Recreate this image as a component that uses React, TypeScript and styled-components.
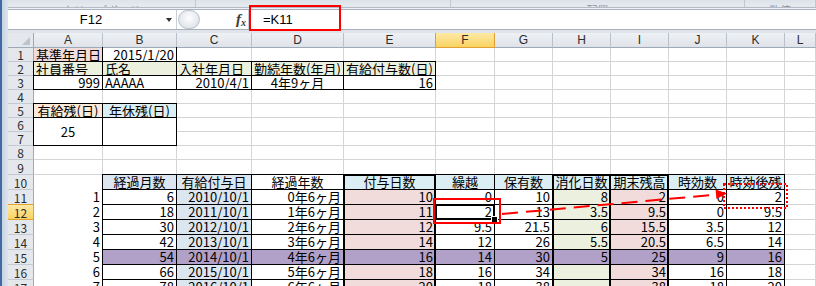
import { Fragment } from "react";
import styled, { createGlobalStyle, css } from "styled-components";

const GlobalStyle = createGlobalStyle`
  html, body {
    margin: 0;
    padding: 0;
    background: #ffffff;
  }
  body {
    font-family: "Noto Sans CJK JP", "Noto Sans", sans-serif;
  }
`;

const GRID = "#d4d4d4";
const PINK = "#f2dcdb";
const SAGE = "#ebf1de";
const PEACH = "#fde9d9";
const AQUA = "#daeef3";
const STEEL = "#dce6f1";
const LILAC = "#b1a0c7";
const ACTIVE = "linear-gradient(#fde9a6, #f9d462)";

type Align = "l" | "c" | "r";
type Box = [number, number, number, number];
type Spec = {
  t?: string;
  a?: Align;
  bg?: string;
  b?: Box;
  span?: number;
  plain?: boolean;
  sel?: boolean;
} | null;

const justify = { l: "flex-start", c: "center", r: "flex-end" };

const Window = styled.div`
  position: relative;
  width: 816px;
  height: 286px;
  overflow: hidden;
  display: flex;
  background: #fff;
`;

const Frame = styled.div`
  width: 8px;
  flex: none;
  background: linear-gradient(90deg, #4169a3 0, #4169a3 2px, #c8d3e2 2px, #dde4ee 8px);
`;

const Main = styled.div`
  flex: 1;
  min-width: 0;
  display: flex;
  flex-direction: column;
`;

const Ribbon = styled.div`
  height: 7px;
  flex: none;
  display: flex;
  overflow: hidden;
  background: linear-gradient(#dce3eb, #e7ebf0);
  border-bottom: 1px solid #b3bbc6;
`;

const RibbonGroup = styled.div<{ $w?: number }>`
  ${(p) => (p.$w ? `width: ${p.$w}px; flex: none;` : "flex: 1;")}
  display: flex;
  justify-content: center;
  align-items: flex-end;
  border-right: 1px solid #c1c8d2;
`;

const GroupLabel = styled.span`
  font-size: 11px;
  line-height: 11px;
  color: #8a929d;
  white-space: nowrap;
  margin-bottom: -9px;
`;

const Gap = styled.div`
  height: 1px;
  flex: none;
  background: #eef1f5;
`;

const FormulaBar = styled.div`
  height: 21px;
  flex: none;
  box-sizing: border-box;
  display: flex;
  background: #fff;
  border-top: 1px solid #a7b0bc;
  border-bottom: 1px solid #a7b0bc;
`;

const NameBox = styled.div`
  width: 169px;
  flex: none;
  box-sizing: border-box;
  display: flex;
  align-items: center;
  border-right: 1px solid #c9cfd8;
  font-family: "Liberation Sans", sans-serif;
  font-size: 13px;
  color: #000;
`;

const NameText = styled.span`
  flex: 1;
  text-align: center;
  padding-left: 8px;
`;

const DropArrow = styled.span`
  width: 0;
  height: 0;
  margin-right: 4px;
  border-left: 3.5px solid transparent;
  border-right: 3.5px solid transparent;
  border-top: 4px solid #333;
`;

const Grip = styled.div`
  width: 22px;
  flex: none;
  margin: 0 0 0 1px;
  box-sizing: border-box;
  border: 1px solid #b9c0ca;
  border-radius: 10px;
  background: radial-gradient(circle at 50% 40%, #ffffff, #d5dae2);
`;

const FxBox = styled.div`
  width: 48px;
  flex: none;
  box-sizing: border-box;
  display: flex;
  align-items: center;
  justify-content: flex-end;
  padding-right: 2px;
  font-family: "Liberation Serif", serif;
  font-style: italic;
  font-weight: bold;
  font-size: 15px;
  color: #3a3a3a;
`;

const FxSub = styled.span`
  font-size: 10px;
  margin-top: 5px;
`;

const FormulaInput = styled.div`
  flex: 1;
  display: flex;
  align-items: center;
  padding-left: 14px;
  border-left: 1px solid #c9cfd8;
  font-family: "Liberation Sans", sans-serif;
  font-size: 13px;
  color: #000;
`;

const Band = styled.div`
  height: 3px;
  flex: none;
  background: #e0e4ea;
`;

const Sheet = styled.div`
  flex: none;
  display: grid;
  grid-template-columns: 26px 69px 74px 75px 92px 92px 59px 58px 58px 58px 58px 58px 1fr;
  grid-template-rows: 15px repeat(8, 14px) 15px repeat(8, 15px);
  font-family: "Liberation Sans Narrow", "Noto Sans CJK JP", sans-serif;
`;

const Corner = styled.div`
  box-sizing: border-box;
  display: flex;
  align-items: flex-end;
  justify-content: flex-end;
  padding: 0 3px 2px 0;
  background: #e4e8ed;
  border-right: 1px solid #9ea9b7;
  border-bottom: 1px solid #9ea9b7;
`;

const CornerMark = styled.div`
  width: 0;
  height: 0;
  border-left: 8px solid transparent;
  border-bottom: 8px solid #bcc3cd;
`;

const ColHead = styled.div<{ $active?: boolean }>`
  box-sizing: border-box;
  display: flex;
  align-items: center;
  justify-content: center;
  font-family: "Liberation Sans", sans-serif;
  font-size: 12px;
  color: #2d2d2d;
  background: ${(p) => (p.$active ? ACTIVE : "linear-gradient(#eef1f4, #dfe3e9)")};
  border-right: 1px solid ${(p) => (p.$active ? "#e2a032" : "#b8c0ca")};
  border-bottom: 1px solid ${(p) => (p.$active ? "#e2a032" : "#9ea9b7")};
  ${(p) => p.$active && "border-left: 1px solid #e2a032; margin-left: -1px;"}
`;

const RowHead = styled.div<{ $active?: boolean }>`
  box-sizing: border-box;
  display: flex;
  align-items: center;
  justify-content: center;
  font-size: 12px;
  color: #2d2d2d;
  background: ${(p) => (p.$active ? ACTIVE : "#e4e8ed")};
  border-right: 1px solid ${(p) => (p.$active ? "#e2a032" : "#9ea9b7")};
  border-bottom: 1px solid ${(p) => (p.$active ? "#e2a032" : "#c3cad3")};
  ${(p) => p.$active && "border-top: 1px solid #e2a032; margin-top: -1px;"}
`;

const Cell = styled.div<{ $a: Align; $bg?: string; $plain?: boolean; $span?: number; $b?: Box }>`
  position: relative;
  box-sizing: border-box;
  grid-row: span ${(p) => p.$span ?? 1};
  display: flex;
  align-items: center;
  justify-content: ${(p) => justify[p.$a]};
  padding: 0 2px;
  font-size: 13px;
  line-height: 14px;
  white-space: nowrap;
  color: #000;
  background: ${(p) => p.$bg ?? "#fff"};
  border-right: 1px solid ${(p) => (p.$bg || p.$plain ? p.$bg ?? "#fff" : GRID)};
  border-bottom: 1px solid ${(p) => (p.$bg || p.$plain ? p.$bg ?? "#fff" : GRID)};
  ${(p) =>
    p.$b &&
    css`
      &::after {
        content: "";
        position: absolute;
        top: -1px;
        left: -1px;
        right: -1px;
        bottom: -1px;
        border-style: solid;
        border-color: #000;
        border-width: ${p.$b[0]}px ${p.$b[1]}px ${p.$b[2]}px ${p.$b[3]}px;
        pointer-events: none;
      }
    `}
`;

const FillHandle = styled.span`
  position: absolute;
  right: -4px;
  bottom: -4px;
  width: 5px;
  height: 5px;
  background: #000;
  border: 1px solid #fff;
  z-index: 2;
`;

const Marks = styled.svg`
  position: absolute;
  top: 0;
  left: 0;
  z-index: 3;
  pointer-events: none;
`;

const T: Box = [1, 1, 1, 1];
const THICK_E: Box = [1, 2, 1, 2];
const blank = (n: number): Spec[] => Array.from({ length: n }, () => ({}));

const COLS = "ABCDEFGHIJKL".split("");

const upper: Spec[][] = [
  [
    { t: "基準年月日", a: "l", bg: PINK, b: [0, 1, 0, 0] },
    { t: "2015/1/20", a: "r", b: [0, 1, 0, 0] },
    ...blank(10),
  ],
  [
    ...["社員番号", "氏名", "入社年月日", "勤続年数(年月)", "有給付与数(日)"].map(
      (t): Spec => ({ t, a: "l", bg: SAGE, b: T })
    ),
    ...blank(7),
  ],
  [
    { t: "999", a: "r", b: T },
    { t: "AAAAA", a: "l", b: T },
    { t: "2010/4/1", a: "r", b: T },
    { t: "4年9ヶ月", a: "c", b: T },
    { t: "16", a: "r", b: T },
    ...blank(7),
  ],
  blank(12),
  [
    { t: "有給残(日)", a: "c", bg: PEACH, b: T },
    { t: "年休残(日)", a: "c", bg: AQUA, b: T },
    ...blank(10),
  ],
  [{ t: "25", a: "c", b: T, span: 2 }, { b: T, span: 2 }, ...blank(10)],
  [null, null, ...blank(10)],
  blank(12),
  blank(12),
];

const header: Spec[] = [
  { plain: true },
  { t: "経過月数", a: "c", bg: STEEL, b: T },
  { t: "有給付与日", a: "c", bg: STEEL, b: T },
  { t: "経過年数", a: "c", b: T },
  { t: "付与日数", a: "c", bg: AQUA, b: [2, 2, 1, 2] },
  { t: "繰越", a: "c", bg: AQUA, b: T },
  { t: "保有数", a: "c", bg: AQUA, b: T },
  { t: "消化日数", a: "c", bg: AQUA, b: [2, 2, 1, 2] },
  { t: "期末残高", a: "c", bg: AQUA, b: [2, 2, 1, 1] },
  { t: "時効数", a: "c", bg: AQUA, b: T },
  { t: "時効後残", a: "c", bg: AQUA, b: T },
  {},
];

const colSpec: Spec[] = [
  { a: "r", plain: true },
  { a: "r", b: T },
  { a: "r", bg: STEEL, b: T },
  { a: "r", b: T },
  { a: "r", bg: PINK, b: THICK_E },
  { a: "r", b: T },
  { a: "r", b: T },
  { a: "r", bg: SAGE, b: THICK_E },
  { a: "r", bg: PINK, b: [1, 2, 1, 1] },
  { a: "r", b: T },
  { a: "r", b: T },
];

const table = [
  ["1", "6", "2010/10/1", "0年6ヶ月", "10", "0", "10", "8", "2", "0", "2"],
  ["2", "18", "2011/10/1", "1年6ヶ月", "11", "2", "13", "3.5", "9.5", "0", "9.5"],
  ["3", "30", "2012/10/1", "2年6ヶ月", "12", "9.5", "21.5", "6", "15.5", "3.5", "12"],
  ["4", "42", "2013/10/1", "3年6ヶ月", "14", "12", "26", "5.5", "20.5", "6.5", "14"],
  ["5", "54", "2014/10/1", "4年6ヶ月", "16", "14", "30", "5", "25", "9", "16"],
  ["6", "66", "2015/10/1", "5年6ヶ月", "18", "16", "34", "", "34", "16", "18"],
  ["7", "78", "2016/10/1", "6年6ヶ月", "20", "18", "38", "", "38", "18", "20"],
];

const lower: Spec[][] = table.map((vals, r) => [
  ...vals.map((t, i): Spec => {
    const base = colSpec[i] as NonNullable<Spec>;
    const spec: NonNullable<Spec> = { ...base, t };
    if (r === 4 && i > 0) spec.bg = LILAC;
    if (r === 1 && i === 5) {
      spec.b = [2, 2, 2, 2];
      spec.sel = true;
    }
    return spec;
  }),
  {},
]);

const rows: Spec[][] = [...upper, header, ...lower];

const App = () => {
  return (
    <>
      <GlobalStyle />
      <Window>
        <Frame />
        <Main>
          <Ribbon>
            <RibbonGroup $w={187}>
              <GroupLabel>クリップボード</GroupLabel>
            </RibbonGroup>
            <RibbonGroup $w={254}>
              <GroupLabel>フォント</GroupLabel>
            </RibbonGroup>
            <RibbonGroup $w={293}>
              <GroupLabel>配置</GroupLabel>
            </RibbonGroup>
            <RibbonGroup>
              <GroupLabel>数値</GroupLabel>
            </RibbonGroup>
          </Ribbon>
          <Gap />
          <FormulaBar>
            <NameBox>
              <NameText>F12</NameText>
              <DropArrow />
            </NameBox>
            <Grip />
            <FxBox>
              f<FxSub>x</FxSub>
            </FxBox>
            <FormulaInput>=K11</FormulaInput>
          </FormulaBar>
          <Band />
          <Sheet>
            <Corner>
              <CornerMark />
            </Corner>
            {COLS.map((c) => (
              <ColHead key={c} $active={c === "F"}>
                {c}
              </ColHead>
            ))}
            {rows.map((cells, r) => (
              <Fragment key={r}>
                <RowHead $active={r + 1 === 12}>{r + 1}</RowHead>
                {cells.map((c, i) =>
                  c ? (
                    <Cell
                      key={i}
                      $a={c.a ?? "l"}
                      $bg={c.bg}
                      $plain={c.plain}
                      $span={c.span}
                      $b={c.b}
                    >
                      {c.t}
                      {c.sel && <FillHandle />}
                    </Cell>
                  ) : null
                )}
              </Fragment>
            ))}
          </Sheet>
        </Main>
        <Marks width={816} height={286} viewBox="0 0 816 286">
          <rect x={250} y={6} width={90} height={24} fill="none" stroke="#ff0000" strokeWidth={2} />
          <rect x={434} y={199} width={66} height={24} fill="none" stroke="#ff0000" strokeWidth={2} />
          <rect
            x={724}
            y={184}
            width={63}
            height={24}
            fill="none"
            stroke="#ff0000"
            strokeWidth={2}
            strokeDasharray="2 2"
          />
          <line
            x1={502}
            y1={214}
            x2={717}
            y2={194.5}
            stroke="#ff0000"
            strokeWidth={2}
            strokeDasharray="16 8"
          />
          <polygon points="727,193.5 716.4,199 715.6,189.5" fill="#ff0000" />
        </Marks>
      </Window>
    </>
  );
};

export default App;
